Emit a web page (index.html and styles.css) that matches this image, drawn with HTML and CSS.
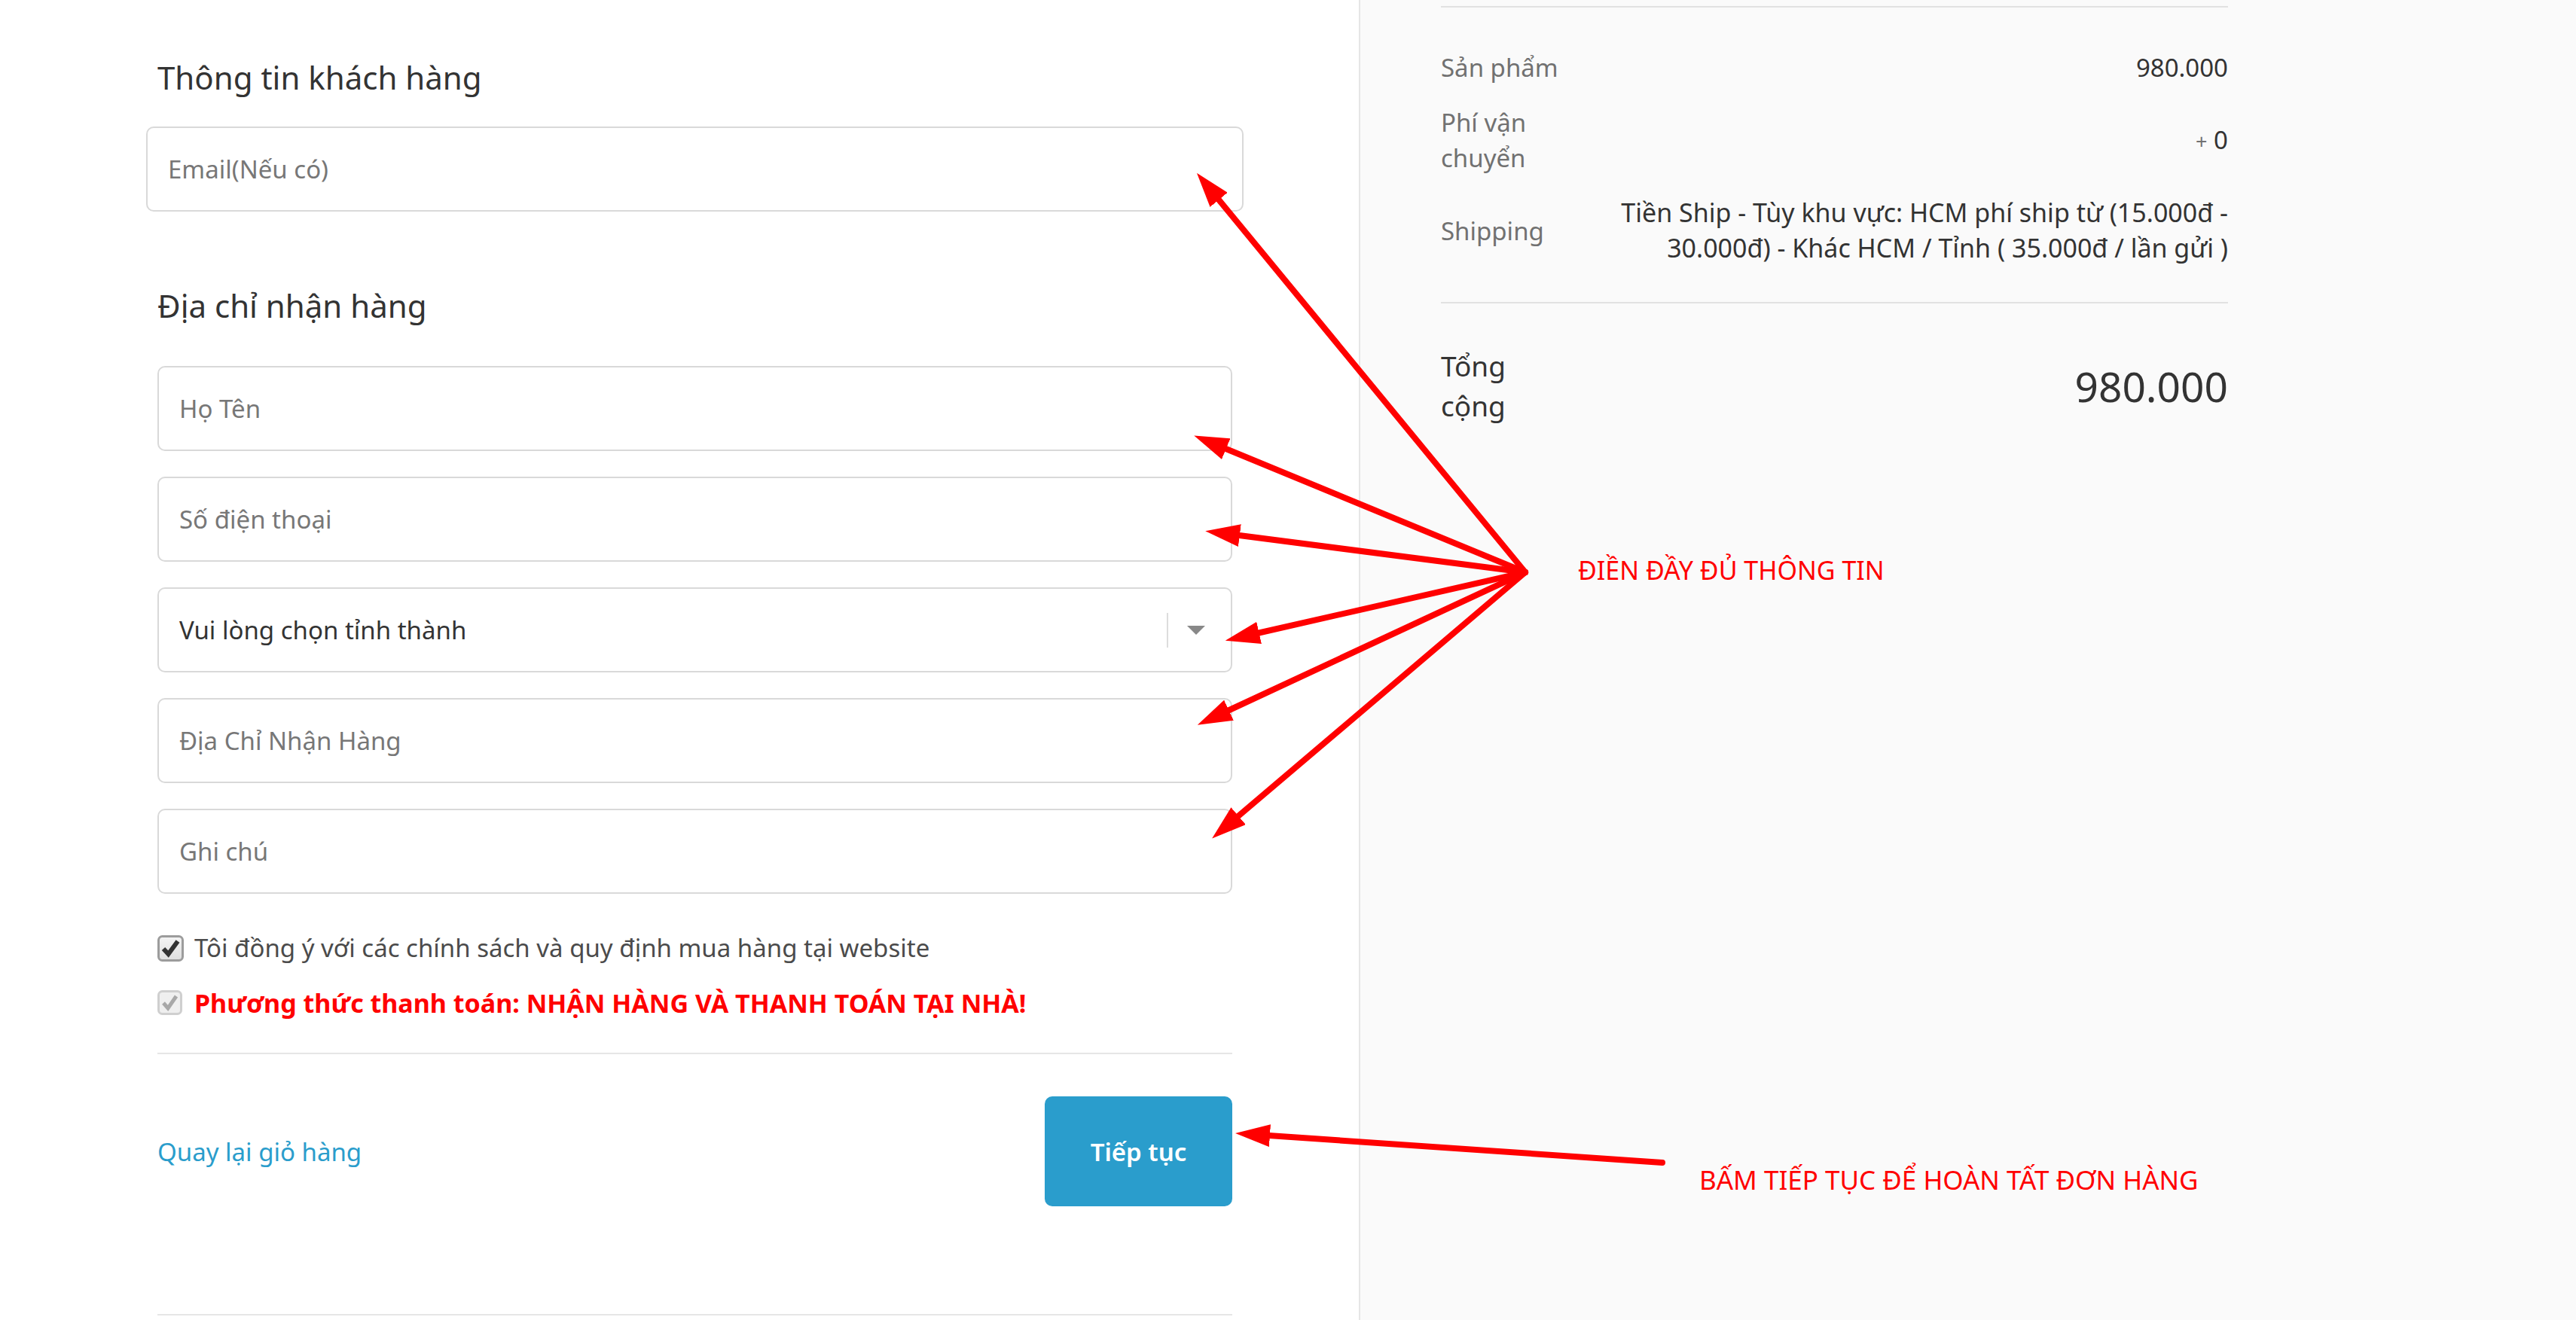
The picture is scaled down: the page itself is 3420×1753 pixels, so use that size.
FILE: index.html
```html
<!DOCTYPE html>
<html lang="vi">
<head>
  <meta charset="UTF-8">
  <meta name="viewport" content="width=device-width, initial-scale=1.0">
  <title>Thông tin giao hàng</title>
  <link rel="stylesheet" href="styles.css">
</head>
<body>
  <div class="checkout">
    <div class="main">
      <div class="section">
        <h2 class="section-title">Thông tin khách hàng</h2>
        <div class="field field-email">
          <input class="field-input" type="email" placeholder="Email(Nếu có)">
        </div>
      </div>

      <div class="section section-address">
        <h2 class="section-title">Địa chỉ nhận hàng</h2>
        <div class="fields">
          <div class="field"><input class="field-input" type="text" placeholder="Họ Tên"></div>
          <div class="field"><input class="field-input" type="tel" placeholder="Số điện thoại"></div>
          <div class="field field-select">
            <span class="select-value">Vui lòng chọn tỉnh thành</span>
            <span class="select-sep"></span>
            <span class="select-arrow"></span>
          </div>
          <div class="field"><input class="field-input" type="text" placeholder="Địa Chỉ Nhận Hàng"></div>
          <div class="field"><input class="field-input" type="text" placeholder="Ghi chú"></div>
        </div>
      </div>

      <div class="agree">
        <label class="check-row">
          <svg viewBox="0 0 35 35" width="35" height="35">
            <defs>
              <linearGradient id="boxbg" x1="0" y1="0" x2="0" y2="1">
                <stop offset="0" stop-color="#f4f4f4"/>
                <stop offset="1" stop-color="#dedede"/>
              </linearGradient>
            </defs>
            <rect x="1.5" y="1.5" width="32" height="32" rx="5" fill="url(#boxbg)" stroke="#9c9c9c" stroke-width="3"/>
            <path d="M8 18 L14.5 25 L27 8" fill="none" stroke="#333" stroke-width="6"/>
          </svg>
          <span>Tôi đồng ý với các chính sách và quy định mua hàng tại website</span>
        </label>
        <label class="check-row">
          <svg viewBox="0 0 35 35" width="35" height="35">
            <rect x="1.5" y="1.5" width="30" height="30" rx="5" fill="#efefef" stroke="#cfcfcf" stroke-width="3"/>
            <path d="M8 17 L14 24 L25 8" fill="none" stroke="#a8a8a8" stroke-width="5"/>
          </svg>
          <span class="pay-method">Phương thức thanh toán: NHẬN HÀNG VÀ THANH TOÁN TẠI NHÀ!</span>
        </label>
      </div>

      <div class="step-footer">
        <a class="back-link" href="#">Quay lại giỏ hàng</a>
        <button class="btn-next" type="button">Tiếp tục</button>
      </div>
    </div>

    <div class="sidebar">
      <div class="summary">
        <div class="summary-lines">
          <div class="line">
            <span class="line-name">Sản phẩm</span>
            <span class="line-price">980.000</span>
          </div>
          <div class="line">
            <span class="line-name">Phí vận chuyển</span>
            <span class="line-price"><span class="plus">+</span> 0</span>
          </div>
          <div class="line line-shipping">
            <span class="line-name">Shipping</span>
            <span class="line-price">Tiền Ship - Tùy khu vực: HCM phí ship từ (15.000đ - 30.000đ) - Khác HCM / Tỉnh ( 35.000đ / lần gửi )</span>
          </div>
        </div>
        <div class="summary-total">
          <div class="line line-total">
            <span class="line-name">Tổng cộng</span>
            <span class="line-price">980.000</span>
          </div>
        </div>
      </div>
    </div>

    <svg class="arrows" width="3420" height="1753" viewBox="0 0 3420 1753">
      <defs>
        <marker id="head" markerUnits="userSpaceOnUse" markerWidth="46" markerHeight="30" refX="16" refY="15" orient="auto">
          <path d="M0 0 L46 15 L0 30 Z" fill="#f00"/>
        </marker>
      </defs>
      <g stroke="#f00" stroke-width="8" stroke-linecap="round" fill="none" marker-end="url(#head)">
        <line x1="2025" y1="760" x2="1608" y2="253"/>
        <line x1="2025" y1="760" x2="1613" y2="590"/>
        <line x1="2025" y1="760" x2="1630" y2="709"/>
        <line x1="2025" y1="760" x2="1656" y2="844"/>
        <line x1="2025" y1="760" x2="1617" y2="950"/>
        <line x1="2025" y1="760" x2="1632" y2="1094"/>
        <line x1="2207" y1="1544" x2="1670" y2="1507"/>
      </g>
    </svg>
    <div class="note note-fill">ĐIỀN ĐẦY ĐỦ THÔNG TIN</div>
    <div class="note note-next">BẤM TIẾP TỤC ĐỂ HOÀN TẤT ĐƠN HÀNG</div>
  </div>
</body>
</html>
```

FILE: styles.css
```css
*{
  margin: 0;
  padding: 0;
  box-sizing: border-box;
}
html{
  background-color: #fff;
}
body{
  color: #333;
  font-family: "Noto Sans", "Open Sans", sans-serif;
}
a{
  text-decoration: none;
}
.checkout{
  position: relative;
  display: flex;
  height: 1753px;
  overflow: hidden;
}
.main{
  width: 1804px;
  flex: none;
  padding: 76px 168px 0 209px;
}
.section-title{
  font-size: 42px;
  font-weight: 400;
  line-height: 53px;
  color: #333;
}
.field{
  height: 113px;
  border: 2px solid #d9d9d9;
  border-radius: 10px;
  background: #fff;
  display: flex;
  align-items: center;
}
.field-email{
  margin: 39px -15px 0;
}
.field-input{
  width: 100%;
  height: 100%;
  padding: 0 27px;
  border: none;
  outline: none;
  background: transparent;
  border-radius: 10px;
  font-family: inherit;
  font-size: 33px;
  color: #333;
}
.field-input::placeholder{
  color: #777;
}
.section-address{
  margin-top: 98px;
}
.fields{
  display: flex;
  flex-direction: column;
  gap: 34px;
  margin-top: 54px;
}
.field-select{
  padding-left: 27px;
}
.select-value{
  flex: 1;
  font-size: 33px;
  color: #333;
}
.select-sep{
  width: 2px;
  height: 46px;
  background: #ddd;
}
.select-arrow{
  width: 0;
  height: 0;
  margin: 0 34px 0 25px;
  border-left: 12px solid transparent;
  border-right: 12px solid transparent;
  border-top: 12px solid #888;
}
.agree{
  margin-top: 48px;
  display: flex;
  flex-direction: column;
  gap: 25px;
  padding-bottom: 42px;
  border-bottom: 2px solid #e6e6e6;
}
.check-row{
  display: flex;
  align-items: center;
  gap: 14px;
  font-size: 33px;
  line-height: 48px;
  color: #4b4b4b;
}
.check-row svg{
  flex: none;
}
.pay-method{
  color: #f00;
  font-size: 34px;
  font-weight: 700;
}
.step-footer{
  display: flex;
  justify-content: space-between;
  align-items: center;
  padding: 56px 0 143px;
  border-bottom: 2px solid #e6e6e6;
}
.back-link{
  color: #2a9dcc;
  font-size: 33px;
}
.btn-next{
  width: 249px;
  height: 146px;
  border: none;
  border-radius: 10px;
  background-color: #2a9dcc;
  color: #fff;
  font-family: inherit;
  font-size: 33px;
  font-weight: 600;
}
.sidebar{
  flex: 1;
  background: #fafafa;
  border-left: 2px solid #e6e6e6;
  padding: 8px 0 0 107px;
}
.summary{
  width: 1045px;
}
.summary-lines{
  border-top: 2px solid #e1e1e1;
  padding: 56px 0 48px;
  display: flex;
  flex-direction: column;
  gap: 26px;
}
.line{
  display: flex;
  justify-content: space-between;
  align-items: center;
  gap: 40px;
  font-size: 33px;
  line-height: 47px;
}
.line-name{
  flex: none;
  width: 170px;
  color: #717171;
}
.line-price{
  text-align: right;
  color: #333;
}
.plus{
  color: #717171;
  font-size: 27px;
}
.line-shipping .line-price{
  font-size: 34px;
}
.summary-total{
  border-top: 2px solid #e1e1e1;
  padding-top: 56px;
}
.line-total .line-name{
  font-size: 37px;
  line-height: 53px;
  color: #333;
}
.line-total .line-price{
  font-size: 55px;
}
.arrows{
  position: absolute;
  left: 0;
  top: 0;
  pointer-events: none;
}
.note{
  position: absolute;
  color: #f00;
  line-height: 1;
  white-space: nowrap;
}
.note-fill{
  left: 2095px;
  top: 740px;
  font-size: 34px;
}
.note-next{
  left: 2256px;
  top: 1549px;
  font-size: 35px;
}
```
